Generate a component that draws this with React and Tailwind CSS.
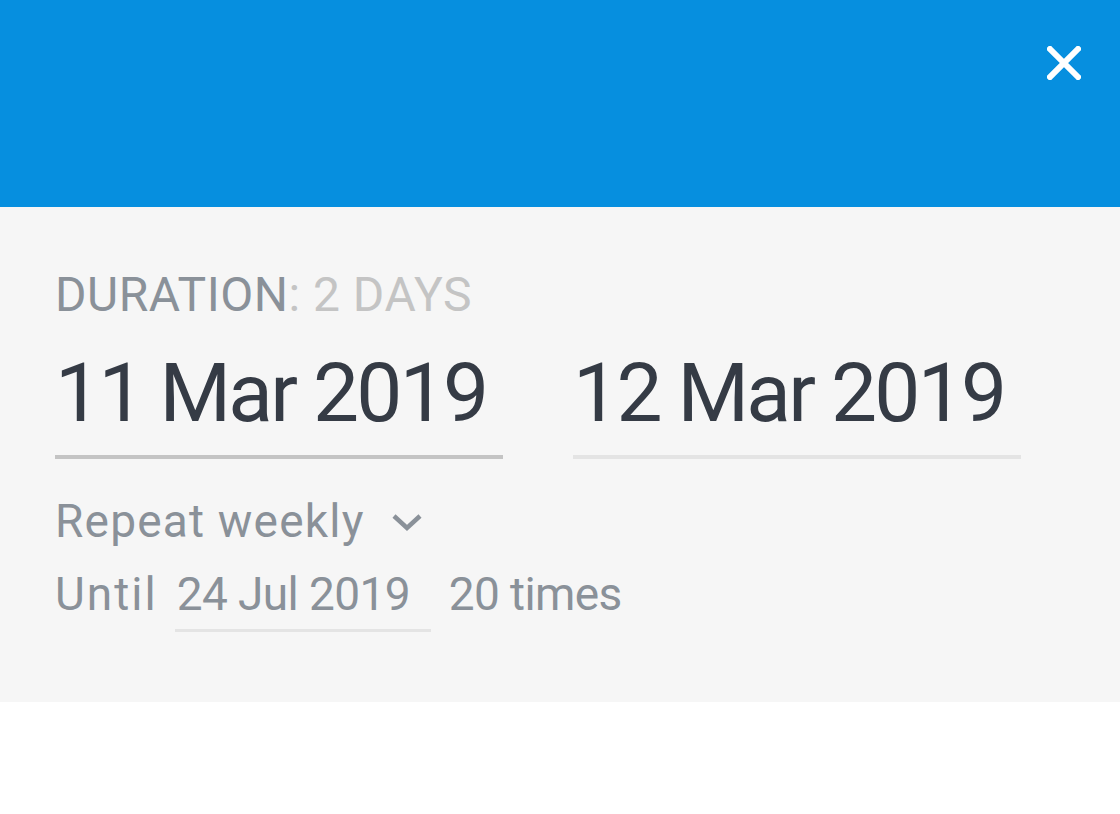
import React from 'react'

const font = { fontFamily: 'Roboto, "Liberation Sans", sans-serif' }

const CloseIcon = () => (
  <svg width="34" height="34" viewBox="0 0 34 34" fill="none">
    <path d="M3 3L31 31M31 3L3 31" stroke="white" strokeWidth="6" strokeLinecap="square" />
  </svg>
)

const Chevron = () => (
  <svg width="32" height="20" viewBox="0 0 32 20" fill="none">
    <path d="M3 4L16 16L29 4" stroke="#8a9199" strokeWidth="4.5" />
  </svg>
)

const DateField = ({ value, lineColor }) => (
  <div className="w-[448px]">
    <div className="h-[96px] mt-[2px] flex items-center whitespace-nowrap text-[82px] leading-none text-[#353b45] tracking-[-2.7px]">{value}</div>
    <div className={`mt-[14px] h-[4px] ${lineColor}`} />
  </div>
)

export default function App() {
  return (
    <div className="w-[1120px] h-[814px] bg-white" style={font}>
      <div className="h-[207px] bg-[#068fdf] flex justify-end items-start pt-[46px] pr-[39px]">
        <button className="w-[34px] h-[34px] flex items-center justify-center">
          <CloseIcon />
        </button>
      </div>
      <div className="h-[495px] bg-[#f6f6f6] pl-[55px] pt-[64px]">
        <div className="h-[48px] flex items-center whitespace-nowrap text-[48px] leading-none tracking-[0.5px]">
          <span className="text-[#8a9199]">DURATION</span>
          <span className="text-[#c4c4c4]">: 2 DAYS</span>
        </div>
        <div className="flex gap-[70px] mt-[24px]">
          <DateField value="11 Mar 2019" lineColor="bg-[#c4c4c4]" />
          <DateField value="12 Mar 2019" lineColor="bg-[#e4e4e4]" />
        </div>
        <div className="flex items-center h-[50px] mt-[37px] whitespace-nowrap text-[46px] leading-none text-[#8a9199] tracking-[1.2px]">
          <span>Repeat weekly</span>
          <span className="ml-[26px] mt-[2px]"><Chevron /></span>
        </div>
        <div className="flex items-start mt-[23px] whitespace-nowrap text-[46px] leading-none text-[#8a9199] tracking-[-0.6px]">
          <span className="h-[50px] flex items-center tracking-[2px]">Until</span>
          <div className="ml-[17px] w-[256px]">
            <div className="h-[50px] flex items-center pl-[2px]">24 Jul 2019</div>
            <div className="mt-[10px] h-[3px] bg-[#e4e4e4]" />
          </div>
          <span className="ml-[18px] h-[50px] flex items-center">20 times</span>
        </div>
      </div>
    </div>
  )
}
